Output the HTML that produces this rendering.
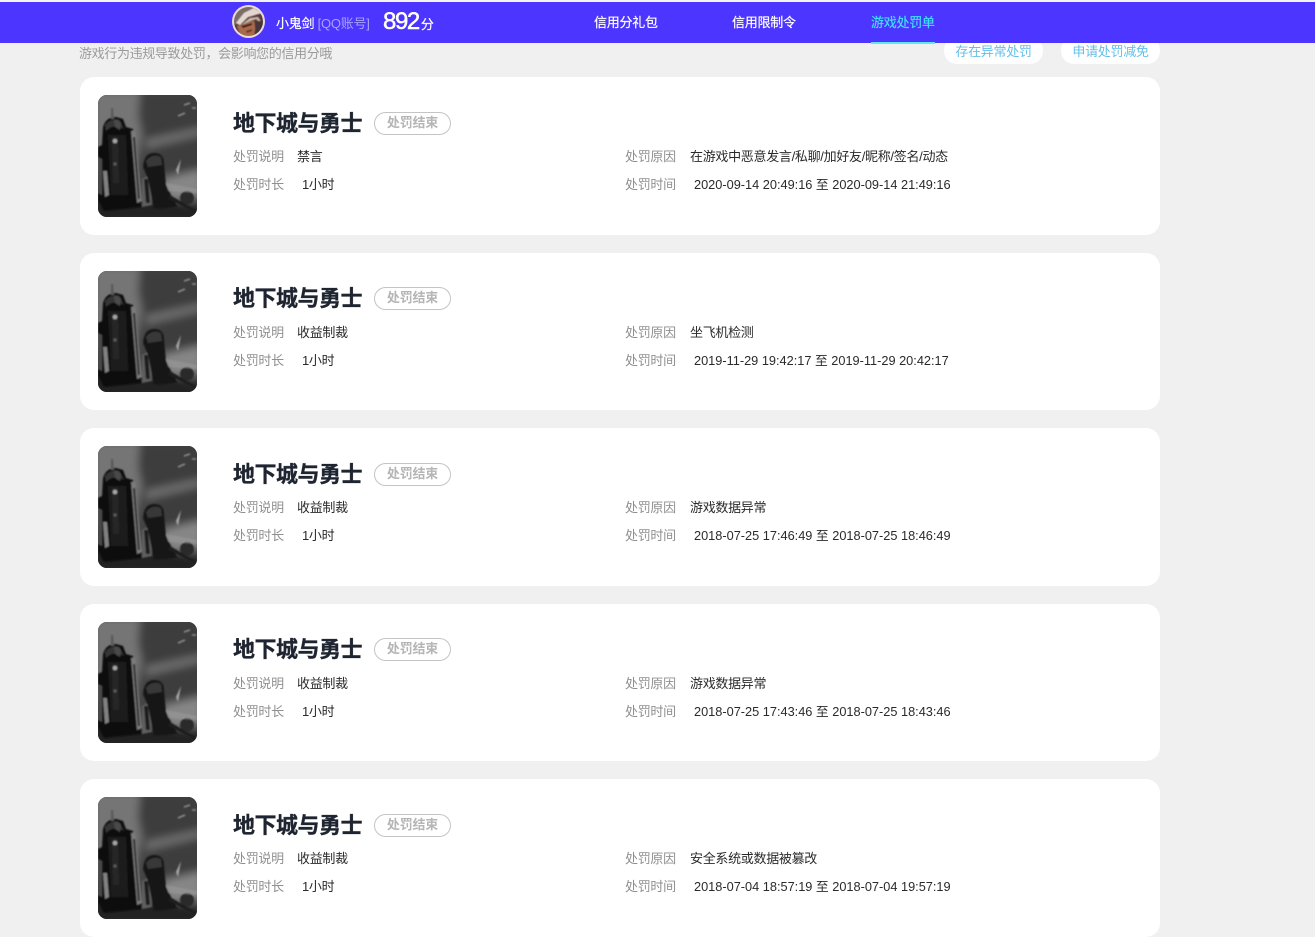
<!DOCTYPE html>
<html lang="zh-CN">
<head>
<meta charset="utf-8">
<title>游戏处罚单</title>
<style>
*{margin:0;padding:0;box-sizing:border-box}
html,body{width:1315px;height:927px;overflow:hidden;background:#f0f0f0;font-family:"Liberation Sans","Noto Sans CJK SC",sans-serif;}
.abs,.t{position:absolute;white-space:nowrap}
.nav{position:absolute;left:0;top:2px;width:1315px;height:41px;background:#4b35ff;z-index:5}
.top{position:absolute;left:0;top:0;width:1315px;height:2px;background:#f3f3f3;z-index:6}
.navt{position:absolute;top:13px;font-size:13px;line-height:15px;color:#fff;z-index:7;white-space:nowrap;letter-spacing:-.25px;-webkit-text-stroke:.2px currentColor}
.pill{position:absolute;top:37px;height:27px;border-radius:13px;background:#fff;color:#63bfe8;font-size:13px;line-height:15px;padding-top:7px;text-align:center;letter-spacing:-.3px}
.card{position:absolute;left:80px;width:1080px;background:#fff;border-radius:14px;overflow:hidden}
.pic{position:absolute;left:18px;top:18px;width:99px;height:122px;border-radius:9px;overflow:hidden;background:#333}
.pic svg{display:block}
.title{position:absolute;left:153px;top:34px;font-size:22px;line-height:26px;font-weight:700;color:#1f2530;white-space:nowrap;letter-spacing:-.5px;-webkit-text-stroke:.35px #1f2530}
.tag{position:absolute;left:294px;top:35px;width:77px;height:23px;border:1px solid #c4c4c4;border-radius:12px;text-align:center;font-size:13px;line-height:19px;font-weight:700;color:#b5b5b5;letter-spacing:-.2px}
.t{font-size:13px;line-height:15px;letter-spacing:-.3px}
.k{color:#8f8f8f}
.v{color:#2a2a2a}
.num{font-size:12.75px;letter-spacing:0}
</style>
</head>
<body>
<div class="top"></div>
<div class="nav"></div>
<svg class="abs" style="left:232px;top:5px;z-index:7" width="33" height="33" viewBox="0 0 33 33">
<defs><clipPath id="av"><circle cx="16.5" cy="16.5" r="14.5"/></clipPath><filter id="avb"><feGaussianBlur stdDeviation=".5"/></filter></defs>
<circle cx="16.5" cy="16.5" r="16.5" fill="#e9dcd6"/>
<g clip-path="url(#av)"><g filter="url(#avb)">
<rect width="33" height="33" fill="#5e3e3c"/>
<path d="M0 0 H33 V12 L24 6 L12 10 L5 18 L0 22Z" fill="#7c6c68"/>
<path d="M4 18 L12 8 L22 3 L30 8 L26 9 L16 12 L8 20Z" fill="#e2d8cf"/>
<path d="M8 21 L18 13 L26 12 L31 20 L24 14 L14 18 L10 24Z" fill="#c4b6aa"/>
<path d="M5 21 L14 18 L22 16 L24 28 L17 33 L8 29Z" fill="#a86a4c"/>
<path d="M9 21 L20 18 L20 20 L11 23Z" fill="#3f2320"/>
<path d="M14 26 L20 24 L20 26 L15 28Z" fill="#6e3428"/>
<path d="M24 16 L33 16 V33 H22Z" fill="#4a3638"/>
<path d="M2 22 L7 27 L9 33 H2Z" fill="#7c4034"/>
</g></g>
</svg>
<div class="navt" style="left:276px;top:16px">小鬼剑 <span style="color:#a9a2ff;-webkit-text-stroke:0">[QQ账号]</span></div>
<div class="navt" style="left:383px;top:8px;font-size:24px;line-height:28px;letter-spacing:-1.4px;-webkit-text-stroke:.5px #fff">892<span style="font-size:13px;letter-spacing:0;margin-left:2px;-webkit-text-stroke:.2px #fff">分</span></div>
<div class="navt" style="left:594px;top:15px">信用分礼包</div>
<div class="navt" style="left:732px;top:15px">信用限制令</div>
<div class="navt" style="left:871px;top:15px;color:#3fe0f5">游戏处罚单</div>
<div class="abs" style="left:871px;top:42px;width:64px;height:2px;background:#5fe6f7;z-index:7"></div>

<div class="t" style="left:79px;top:46px;color:#9a9a9a;letter-spacing:-.35px">游戏行为违规导致处罚，会影响您的信用分哦</div>
<div class="pill" style="left:944px;width:99px">存在异常处罚</div>
<div class="pill" style="left:1061px;width:99px">申请处罚减免</div>

<svg width="0" height="0" style="position:absolute">
<defs>
<filter id="b1" x="-5%" y="-5%" width="110%" height="110%"><feGaussianBlur stdDeviation=".8"/></filter>
<filter id="b2" x="-20%" y="-20%" width="140%" height="140%"><feGaussianBlur stdDeviation="4"/></filter>
<symbol id="art" viewBox="0 0 99 122">
<rect width="99" height="122" fill="#444"/>
<g filter="url(#b2)">
<path d="M-5 -5 H42 L40 20 L44 40 L36 80 H-5Z" fill="#747474"/>
<path d="M44 -5 H104 V30 L48 44 L42 20Z" fill="#3e3e3e"/>
<path d="M48 44 L104 32 V40 L48 54Z" fill="#6c6c6c"/>
<path d="M50 54 L104 42 V72 L66 78Z" fill="#3c3c3c"/>
<path d="M62 84 L104 74 V102 L72 106Z" fill="#868686"/>
<path d="M-5 104 H60 L104 112 V127 H-5Z" fill="#242424"/>
</g>
<g filter="url(#b1)">
<path d="M0 52 L4 50 L5 32 Q8 22 18 22 L25 24 L28 32 L35 34 L40 100 L44 112 L6 116 L0 105Z" fill="#0d0d0d"/>
<path d="M13 13 L15 13 L16 24 L13 24Z" fill="#5a5a5a"/>
<path d="M7 30 Q14 22 22 26 L26 34 Q16 28 8 36Z" fill="#363636"/>
<path d="M16 25 Q21 23 23 29 L22 35 L17 32Z" fill="#484848"/>
<path d="M10 40 H28 L30 100 H13Z" fill="#1a1a1a"/>
<path d="M14 42 H20 L21 88 H15Z" fill="#282828"/>
<circle cx="17" cy="46" r="2.3" fill="#a8a8a8"/>
<circle cx="17" cy="69" r="1.6" fill="#5c5c5c"/>
<path d="M33 36 L37 36 L44 106 L39 108Z" fill="#7c7c7c"/>
<path d="M35 42 L37 42 L42 104 L40 104Z" fill="#2c2c2c"/>
<path d="M5 76 L9 76 L11 100 L7 102Z" fill="#828282"/>
<path d="M0 62 L4 64 L4 100 L0 98Z" fill="#484848"/>
<path d="M44 84 L52 80 L54 110 L44 112Z" fill="#5e5e5e"/>
<path d="M46 84 L50 84 L52 108 L48 108Z" fill="#1c1c1c"/>
<path d="M45 72 Q46 58 56 58 Q66 58 66 68 L68 90 L74 102 L80 112 L56 114 L50 84Z" fill="#151515"/>
<path d="M48 66 Q54 58 63 62 L64 70 L50 72Z" fill="#383838"/>
<circle cx="89" cy="103" r="7" fill="#2c2c2c"/>
<path d="M72 100 L92 112 L99 116 L99 118 L70 104Z" fill="#1e1e1e"/>
<path d="M68 88 L99 94 L99 98 L70 96Z" fill="#a0a0a0" opacity=".45"/>
<path d="M78 75 L83 64 L80 80Z" fill="#a8a8a8"/>
<path d="M80 21 L87 18 M86 10 L92 8 M94 13 L98 13" stroke="#8c8c8c" stroke-width="1.6" fill="none"/>
</g>
</symbol>
</defs>
</svg>

<div class="card" style="top:77px;height:158px">
<div class="pic"><svg width="99" height="122"><use href="#art"/></svg></div>
<div class="title">地下城与勇士</div><div class="tag">处罚结束</div>
<div class="t k" style="left:153px;top:72px">处罚说明</div><div class="t v" style="left:217px;top:72px">禁言</div>
<div class="t k" style="left:153px;top:100px">处罚时长</div><div class="t v" style="left:222px;top:100px">1小时</div>
<div class="t k" style="left:545px;top:72px">处罚原因</div><div class="t v" style="left:610px;top:72px">在游戏中恶意发言/私聊/加好友/昵称/签名/动态</div>
<div class="t k" style="left:545px;top:100px">处罚时间</div><div class="t v num" style="left:614px;top:100px">2020-09-14 20:49:16 至 2020-09-14 21:49:16</div>
</div>

<div class="card" style="top:253px;height:157px">
<div class="pic" style="height:121px"><svg width="99" height="122"><use href="#art"/></svg></div>
<div class="title" style="top:33px">地下城与勇士</div><div class="tag" style="top:34px">处罚结束</div>
<div class="t k" style="left:153px;top:72px">处罚说明</div><div class="t v" style="left:217px;top:72px">收益制裁</div>
<div class="t k" style="left:153px;top:100px">处罚时长</div><div class="t v" style="left:222px;top:100px">1小时</div>
<div class="t k" style="left:545px;top:72px">处罚原因</div><div class="t v" style="left:610px;top:72px">坐飞机检测</div>
<div class="t k" style="left:545px;top:100px">处罚时间</div><div class="t v num" style="left:614px;top:100px">2019-11-29 19:42:17 至 2019-11-29 20:42:17</div>
</div>

<div class="card" style="top:428px;height:158px">
<div class="pic"><svg width="99" height="122"><use href="#art"/></svg></div>
<div class="title">地下城与勇士</div><div class="tag">处罚结束</div>
<div class="t k" style="left:153px;top:72px">处罚说明</div><div class="t v" style="left:217px;top:72px">收益制裁</div>
<div class="t k" style="left:153px;top:100px">处罚时长</div><div class="t v" style="left:222px;top:100px">1小时</div>
<div class="t k" style="left:545px;top:72px">处罚原因</div><div class="t v" style="left:610px;top:72px">游戏数据异常</div>
<div class="t k" style="left:545px;top:100px">处罚时间</div><div class="t v num" style="left:614px;top:100px">2018-07-25 17:46:49 至 2018-07-25 18:46:49</div>
</div>

<div class="card" style="top:604px;height:157px">
<div class="pic" style="height:121px"><svg width="99" height="122"><use href="#art"/></svg></div>
<div class="title" style="top:33px">地下城与勇士</div><div class="tag" style="top:34px">处罚结束</div>
<div class="t k" style="left:153px;top:72px">处罚说明</div><div class="t v" style="left:217px;top:72px">收益制裁</div>
<div class="t k" style="left:153px;top:100px">处罚时长</div><div class="t v" style="left:222px;top:100px">1小时</div>
<div class="t k" style="left:545px;top:72px">处罚原因</div><div class="t v" style="left:610px;top:72px">游戏数据异常</div>
<div class="t k" style="left:545px;top:100px">处罚时间</div><div class="t v num" style="left:614px;top:100px">2018-07-25 17:43:46 至 2018-07-25 18:43:46</div>
</div>

<div class="card" style="top:779px;height:158px">
<div class="pic"><svg width="99" height="122"><use href="#art"/></svg></div>
<div class="title">地下城与勇士</div><div class="tag">处罚结束</div>
<div class="t k" style="left:153px;top:72px">处罚说明</div><div class="t v" style="left:217px;top:72px">收益制裁</div>
<div class="t k" style="left:153px;top:100px">处罚时长</div><div class="t v" style="left:222px;top:100px">1小时</div>
<div class="t k" style="left:545px;top:72px">处罚原因</div><div class="t v" style="left:610px;top:72px">安全系统或数据被篡改</div>
<div class="t k" style="left:545px;top:100px">处罚时间</div><div class="t v num" style="left:614px;top:100px">2018-07-04 18:57:19 至 2018-07-04 19:57:19</div>
</div>
</body>
</html>
